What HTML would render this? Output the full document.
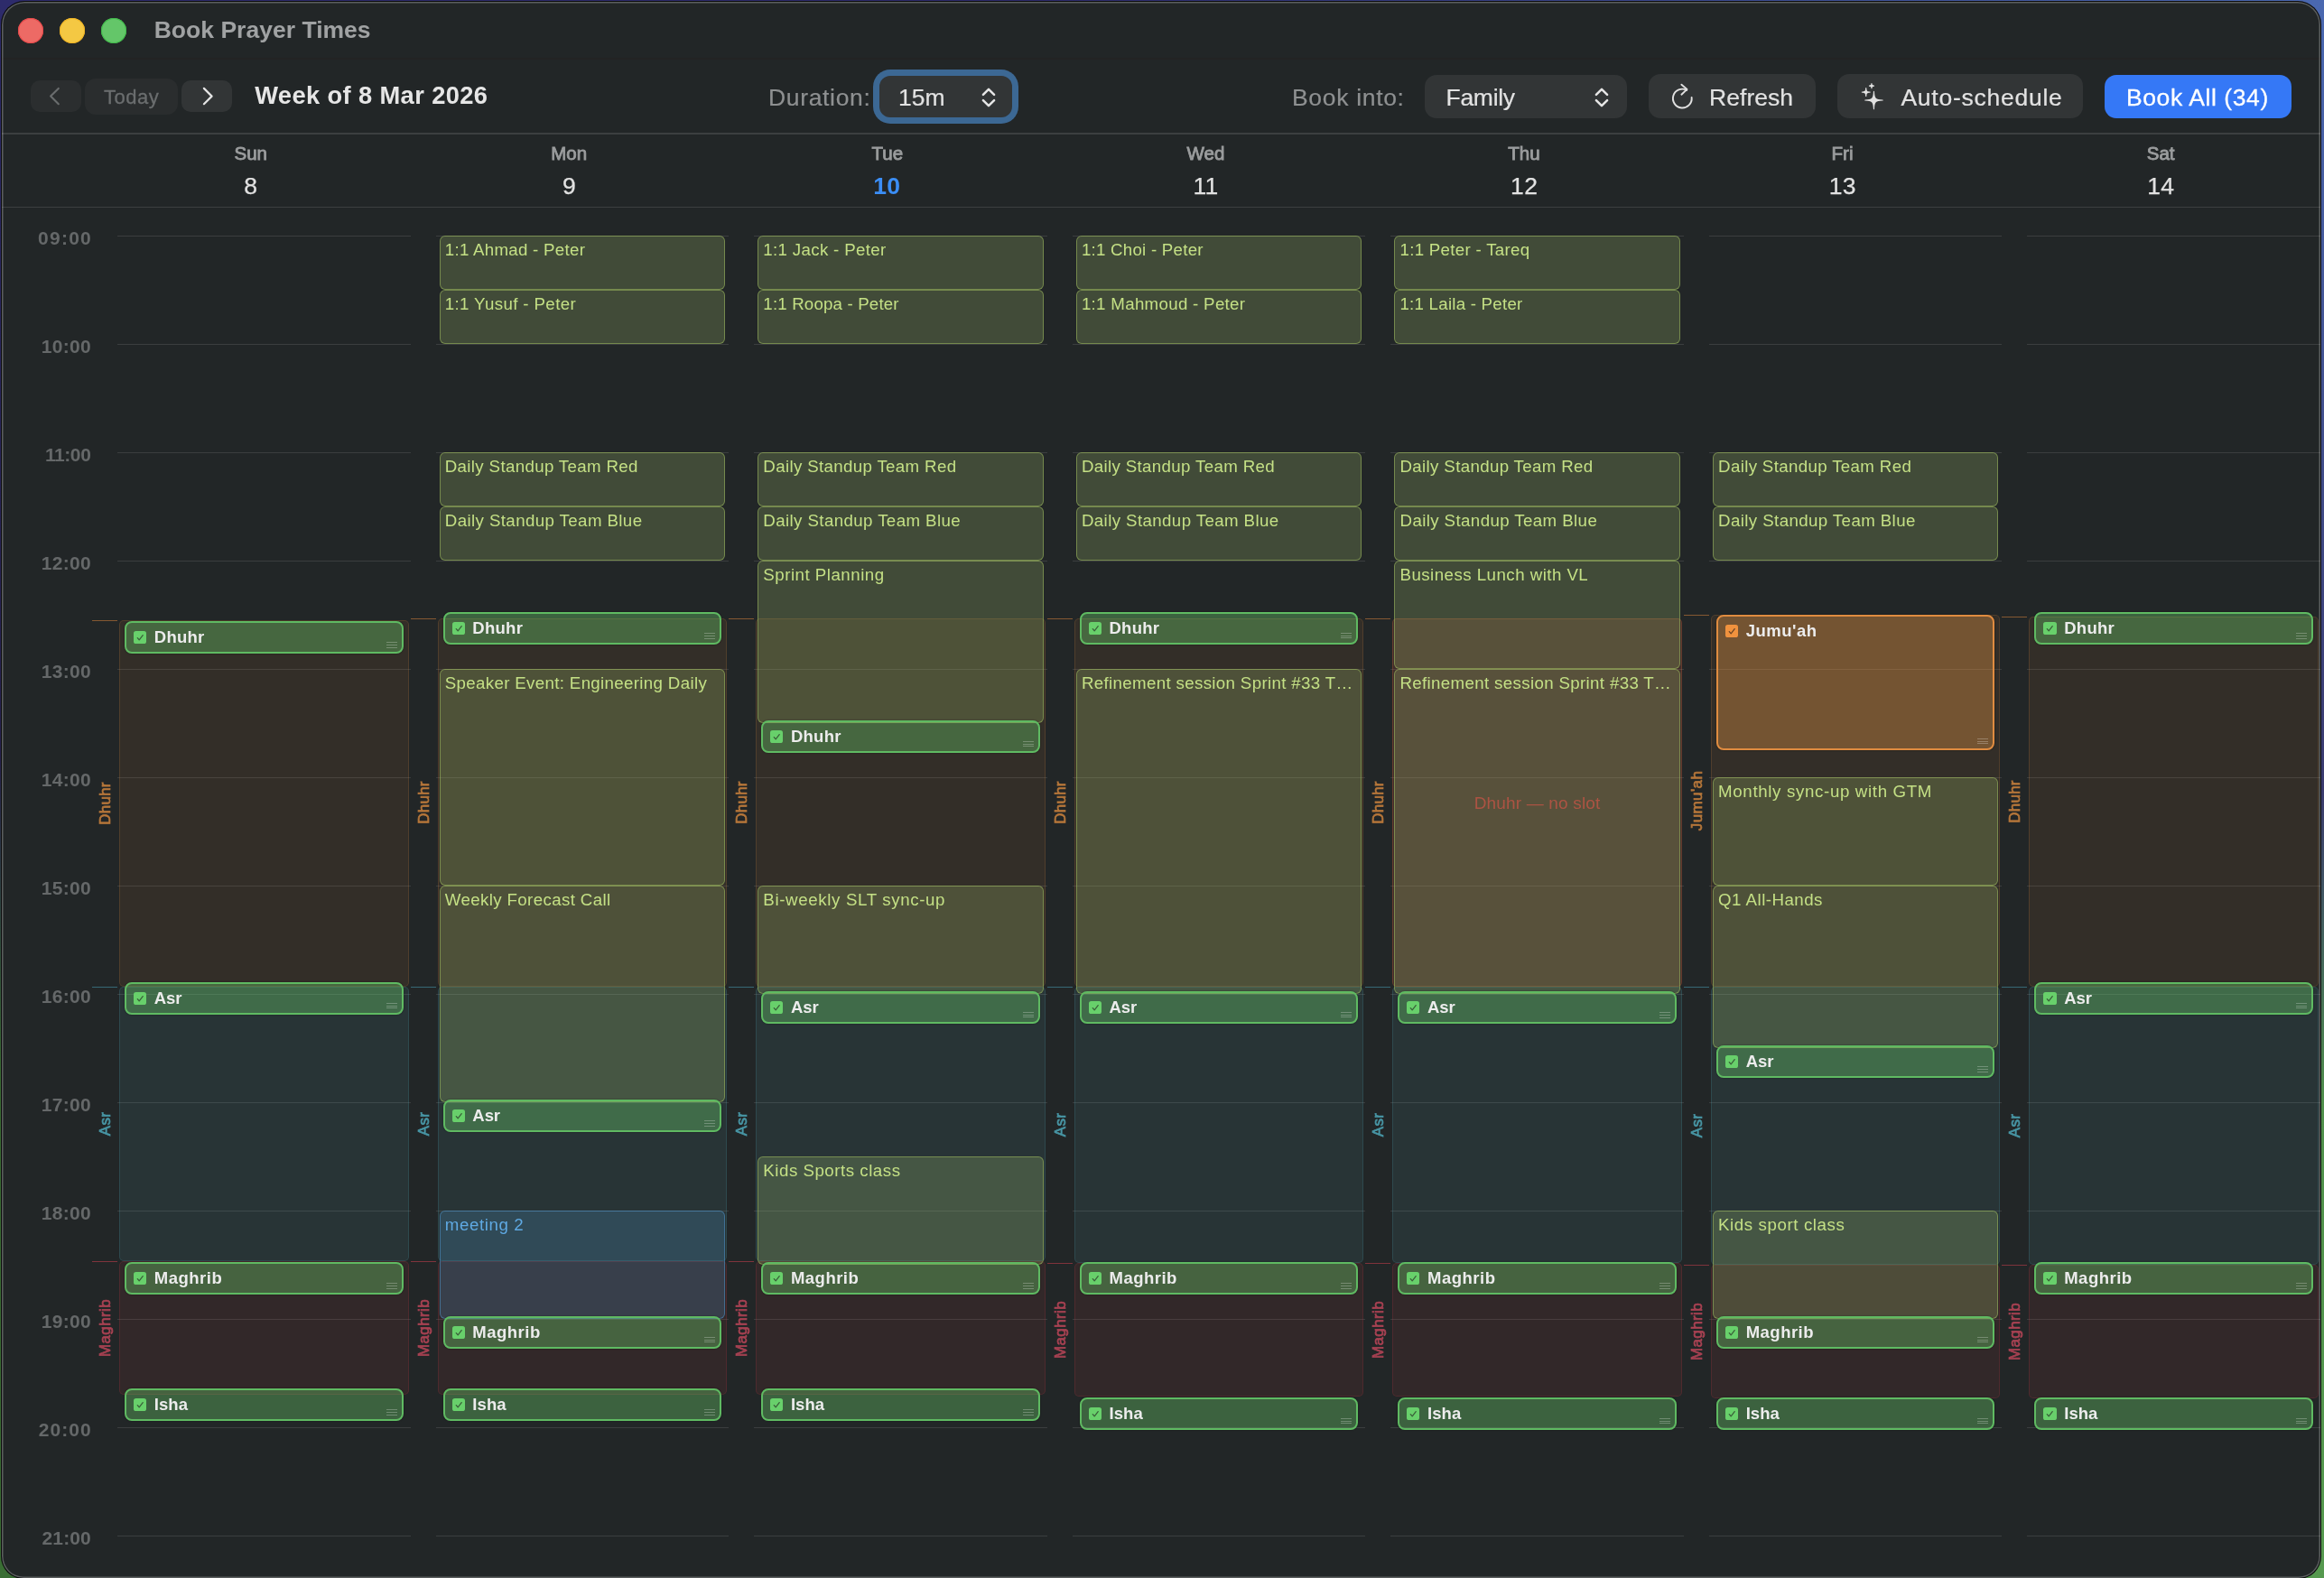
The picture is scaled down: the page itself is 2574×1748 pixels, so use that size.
<!DOCTYPE html>
<html lang="en"><head><meta charset="utf-8"><title>Book Prayer Times</title>
<style>
html,body{margin:0;padding:0;font-family:"Liberation Sans", sans-serif;}
body{width:2574px;height:1748px;overflow:hidden;position:relative;font-family:"Liberation Sans", sans-serif;
background:#2d2b6b;}
#win{position:absolute;left:2px;top:2px;width:2568px;height:1746px;background:#222627;border-radius:25px 25px 24px 24px;
box-shadow:0 0 0 1px #0c0c0d;overflow:hidden;}
#win:after{content:"";position:absolute;left:0;top:0;right:0;bottom:0;border-radius:25px 25px 24px 24px;
box-shadow:inset 0 0 0 1.5px rgba(255,255,255,0.26);pointer-events:none;z-index:50;}
#c{position:absolute;left:-2px;top:-2px;width:2574px;height:1748px;will-change:transform;transform:translateZ(0);}
.ev{position:absolute;box-sizing:border-box;border-radius:6px;border:1px solid rgba(160,190,95,0.55);background:rgba(158,186,107,0.25);}
.ev.bl{border-color:rgba(80,145,200,0.55);background:rgba(87,181,248,0.17);}
.sl{position:absolute;box-sizing:border-box;border-radius:8px;border:2px solid #5fba62;background:rgba(107,204,109,0.36);box-shadow:0 0 2px rgba(0,0,0,0.45);}
.sl.j{border-color:#e08c40;background:rgba(235,152,69,0.36);}
.cb{position:absolute;left:8px;top:8.8px;width:14.2px;height:14.2px;border-radius:2.6px;background:#68d06b;}
.sl.j .cb{background:#f0923e;}
.cb svg{position:absolute;left:0;top:0;}
.hd{position:absolute;right:5px;bottom:4px;width:12px;height:7px;
background:linear-gradient(180deg,rgba(255,255,255,0.26) 0,rgba(255,255,255,0.26) 1px,transparent 1px,transparent 2.75px,rgba(255,255,255,0.26) 2.75px,rgba(255,255,255,0.26) 3.75px,transparent 3.75px,transparent 5.5px,rgba(255,255,255,0.26) 5.5px,rgba(255,255,255,0.26) 6.5px,transparent 6.5px);}
.sn{position:absolute;left:30.8px;top:0;font-weight:bold;font-size:18.5px;line-height:32px;color:#ececec;white-space:nowrap;}
.wn{position:absolute;box-sizing:border-box;border-radius:5px;border:1px solid;}
.vl{position:absolute;width:200px;height:28px;line-height:28px;text-align:center;font-size:17px;letter-spacing:0.4px;white-space:nowrap;transform:rotate(-90deg);transform-origin:center center;-webkit-text-stroke:0.7px currentColor;}
.btn{position:absolute;background:#323536;}
</style></head><body>
<div style="position:absolute;left:0;top:0;width:60px;height:1748px;background:linear-gradient(180deg,#2d2b6b 0%,#28234f 48%,#3a6e34 68%,#3a6e34 100%);"></div>
<div style="position:absolute;right:0;top:0;width:60px;height:1748px;background:linear-gradient(180deg,#4a68b0 0%,#3a3a6e 50%,#508f4b 70%,#56994f 100%);"></div>
<div style="position:absolute;left:0;top:0;width:2574px;height:6px;background:linear-gradient(90deg,#2d2b6b 0%,#2d2b6b 45%,#4a68b0 100%);"></div>
<div style="position:absolute;left:0;bottom:0;width:2574px;height:6px;background:linear-gradient(90deg,#3a6e34 0%,#56994f 100%);"></div>
<div id="win"><div id="c">

<div style="position:absolute;left:20px;top:20px;width:28px;height:28px;border-radius:50%;background:#ed6a65;box-shadow:inset 0 0 0 1px #e8484a;"></div>
<div style="position:absolute;left:66px;top:20px;width:28px;height:28px;border-radius:50%;background:#f4c843;box-shadow:inset 0 0 0 1px #f0b323;"></div>
<div style="position:absolute;left:112px;top:20px;width:28px;height:28px;border-radius:50%;background:#64c669;box-shadow:inset 0 0 0 1px #3fbb4a;"></div>
<div style="position:absolute;top:16.02px;line-height:34px;font-size:26.5px;color:#a0a2a3;white-space:nowrap;font-weight:bold;letter-spacing:0.02px;left:170.7px;">Book Prayer Times</div>
<div style="position:absolute;left:2px;top:64.3px;width:2568px;height:1.4px;background:#232323;"></div>
<div style="position:absolute;left:34px;top:89px;width:56px;height:35px;border-radius:10px;background:#2b2e2f;"></div>
<svg style="position:absolute;left:34px;top:89px" width="56" height="35" viewBox="0 0 56 35"><path d="M30.8 8.9 L22.1 17.6 L30.8 26.2" fill="none" stroke="#6a6d6e" stroke-width="2.1" stroke-linecap="round" stroke-linejoin="round"/></svg>
<div style="position:absolute;left:94px;top:87px;width:103px;height:40px;border-radius:12px;background:#2a2d2e;"></div>
<div style="position:absolute;top:92.88px;line-height:29px;font-size:22px;color:#6b6e6f;white-space:nowrap;letter-spacing:0.5px;left:-254.3px;width:800px;text-align:center;-webkit-text-stroke:0.3px #6b6e6f;">Today</div>
<div style="position:absolute;left:201px;top:89px;width:56px;height:35px;border-radius:10px;background:#323536;"></div>
<svg style="position:absolute;left:201px;top:89px" width="56" height="35" viewBox="0 0 56 35"><path d="M24.9 8.9 L33.6 17.6 L24.9 26.2" fill="none" stroke="#e4e4e4" stroke-width="2.2" stroke-linecap="round" stroke-linejoin="round"/></svg>
<div style="position:absolute;top:88.24px;line-height:35px;font-size:27.3px;color:#e6e6e6;white-space:nowrap;font-weight:bold;letter-spacing:0.38px;left:282.2px;">Week of 8 Mar 2026</div>
<div style="position:absolute;top:90.82px;line-height:34px;font-size:26.5px;color:#8e9091;white-space:nowrap;letter-spacing:0.66px;left:851px;-webkit-text-stroke:0.2px currentColor;">Duration:</div>
<div style="position:absolute;left:967px;top:77px;width:161px;height:60px;border-radius:19px;background:#3c6894;"></div>
<div style="position:absolute;left:974px;top:84px;width:147px;height:46px;border-radius:12px;background:#323536;"></div>
<div style="position:absolute;top:90.82px;line-height:34px;font-size:26.5px;color:#e2e2e2;white-space:nowrap;left:995px;-webkit-text-stroke:0.2px currentColor;">15m</div>
<svg style="position:absolute;left:1084.5px;top:94.5px" width="20" height="26" viewBox="-10 -13 20 26"><path d="M-6.1 -3.1 L0 -9.2 L6.1 -3.1 M-6.1 3.1 L0 9.2 L6.1 3.1" fill="none" stroke="#e6e6e6" stroke-width="2.5" stroke-linecap="round" stroke-linejoin="round"/></svg>
<div style="position:absolute;top:90.82px;line-height:34px;font-size:26.5px;color:#8e9091;white-space:nowrap;letter-spacing:0.68px;left:1431px;-webkit-text-stroke:0.2px currentColor;">Book into:</div>
<div style="position:absolute;left:1578px;top:83px;width:224px;height:48px;border-radius:13px;background:#323536;"></div>
<div style="position:absolute;top:90.82px;line-height:34px;font-size:26.5px;color:#e2e2e2;white-space:nowrap;letter-spacing:-0.28px;left:1601.5px;-webkit-text-stroke:0.2px currentColor;">Family</div>
<svg style="position:absolute;left:1764.1px;top:94.5px" width="20" height="26" viewBox="-10 -13 20 26"><path d="M-6.1 -3.1 L0 -9.2 L6.1 -3.1 M-6.1 3.1 L0 9.2 L6.1 3.1" fill="none" stroke="#e6e6e6" stroke-width="2.5" stroke-linecap="round" stroke-linejoin="round"/></svg>
<div style="position:absolute;left:1826px;top:82.3px;width:185px;height:48.6px;border-radius:13px;background:#323536;"></div>
<svg style="position:absolute;left:1843px;top:89px" width="40" height="40" viewBox="1843 89 40 40"><path d="M1873.65 108.0 A10.4 10.4 0 1 1 1868.2 99.9" fill="none" stroke="#e1e1e1" stroke-width="1.9" stroke-linecap="round"/><path d="M1862.4 93.7 L1868.5 98.9 L1862.4 104.7" fill="none" stroke="#e1e1e1" stroke-width="1.9" stroke-linecap="round" stroke-linejoin="round"/></svg>
<div style="position:absolute;top:90.82px;line-height:34px;font-size:26.5px;color:#e2e2e2;white-space:nowrap;letter-spacing:0.02px;left:1893.1px;-webkit-text-stroke:0.2px currentColor;">Refresh</div>
<div style="position:absolute;left:2035px;top:82.3px;width:272px;height:48.6px;border-radius:13px;background:#323536;"></div>
<svg style="position:absolute;left:2055px;top:86px" width="40" height="40" viewBox="2055 86 40 40"><path d="M2074.90 101.25 A0.55 0.55 0 0 1 2076.00 101.25 C2076.40 109.10 2077.35 110.05 2085.20 110.45 A0.55 0.55 0 0 1 2085.20 111.55 C2077.35 111.95 2076.40 112.90 2076.00 120.75 A0.55 0.55 0 0 1 2074.90 120.75 C2074.50 112.90 2073.55 111.95 2065.70 111.55 A0.55 0.55 0 0 1 2065.70 110.45 C2073.55 110.05 2074.50 109.10 2074.90 101.25 Z M2066.15 97.70 A0.6 0.6 0 0 1 2067.35 97.70 C2067.55 101.00 2067.85 101.30 2071.15 101.50 A0.6 0.6 0 0 1 2071.15 102.70 C2067.85 102.90 2067.55 103.20 2067.35 106.50 A0.6 0.6 0 0 1 2066.15 106.50 C2065.95 103.20 2065.65 102.90 2062.35 102.70 A0.6 0.6 0 0 1 2062.35 101.50 C2065.65 101.30 2065.95 101.00 2066.15 97.70 Z M2072.40 92.55 A0.55 0.55 0 0 1 2073.50 92.55 C2073.65 94.20 2073.85 94.40 2075.50 94.55 A0.55 0.55 0 0 1 2075.50 95.65 C2073.85 95.80 2073.65 96.00 2073.50 97.65 A0.55 0.55 0 0 1 2072.40 97.65 C2072.25 96.00 2072.05 95.80 2070.40 95.65 A0.55 0.55 0 0 1 2070.40 94.55 C2072.05 94.40 2072.25 94.20 2072.40 92.55 Z" fill="#e1e1e1"/></svg>
<div style="position:absolute;top:90.82px;line-height:34px;font-size:26.5px;color:#e2e2e2;white-space:nowrap;letter-spacing:0.75px;left:2105.4px;-webkit-text-stroke:0.2px currentColor;">Auto-schedule</div>
<div style="position:absolute;left:2331px;top:83px;width:207px;height:47.8px;border-radius:13px;background:#3578f6;"></div>
<div style="position:absolute;top:90.82px;line-height:34px;font-size:26.5px;color:#ffffff;white-space:nowrap;letter-spacing:0.58px;left:2355px;-webkit-text-stroke:0.3px #fff;">Book All (34)</div>
<div style="position:absolute;left:2px;top:147.1px;width:2568px;height:1.7px;background:#3c3f40;"></div>
<div style="position:absolute;left:2px;top:228.8px;width:2568px;height:1.7px;background:#3c3f40;"></div>
<div style="position:absolute;top:156.4px;line-height:27px;font-size:20.5px;color:#9b9d9e;white-space:nowrap;left:-122.31px;width:800px;text-align:center;-webkit-text-stroke:0.85px #9b9d9e;">Sun</div>
<div style="position:absolute;top:188.82px;line-height:34px;font-size:26.5px;color:#e2e2e2;white-space:nowrap;letter-spacing:0.3px;left:-122.11px;width:800px;text-align:center;-webkit-text-stroke:0.25px #e2e2e2;">8</div>
<div style="position:absolute;top:156.4px;line-height:27px;font-size:20.5px;color:#9b9d9e;white-space:nowrap;left:230.26px;width:800px;text-align:center;-webkit-text-stroke:0.85px #9b9d9e;">Mon</div>
<div style="position:absolute;top:188.82px;line-height:34px;font-size:26.5px;color:#e2e2e2;white-space:nowrap;letter-spacing:0.3px;left:230.46px;width:800px;text-align:center;-webkit-text-stroke:0.25px #e2e2e2;">9</div>
<div style="position:absolute;top:156.4px;line-height:27px;font-size:20.5px;color:#9b9d9e;white-space:nowrap;left:582.83px;width:800px;text-align:center;-webkit-text-stroke:0.85px #9b9d9e;">Tue</div>
<div style="position:absolute;top:188.82px;line-height:34px;font-size:26.5px;color:#3b8ef6;white-space:nowrap;font-weight:bold;letter-spacing:0.3px;left:582.23px;width:800px;text-align:center;">10</div>
<div style="position:absolute;top:156.4px;line-height:27px;font-size:20.5px;color:#9b9d9e;white-space:nowrap;left:935.4px;width:800px;text-align:center;-webkit-text-stroke:0.85px #9b9d9e;">Wed</div>
<div style="position:absolute;top:188.82px;line-height:34px;font-size:26.5px;color:#e2e2e2;white-space:nowrap;letter-spacing:0.3px;left:935.6px;width:800px;text-align:center;-webkit-text-stroke:0.25px #e2e2e2;">11</div>
<div style="position:absolute;top:156.4px;line-height:27px;font-size:20.5px;color:#9b9d9e;white-space:nowrap;left:1287.97px;width:800px;text-align:center;-webkit-text-stroke:0.85px #9b9d9e;">Thu</div>
<div style="position:absolute;top:188.82px;line-height:34px;font-size:26.5px;color:#e2e2e2;white-space:nowrap;letter-spacing:0.3px;left:1288.17px;width:800px;text-align:center;-webkit-text-stroke:0.25px #e2e2e2;">12</div>
<div style="position:absolute;top:156.4px;line-height:27px;font-size:20.5px;color:#9b9d9e;white-space:nowrap;left:1640.54px;width:800px;text-align:center;-webkit-text-stroke:0.85px #9b9d9e;">Fri</div>
<div style="position:absolute;top:188.82px;line-height:34px;font-size:26.5px;color:#e2e2e2;white-space:nowrap;letter-spacing:0.3px;left:1640.74px;width:800px;text-align:center;-webkit-text-stroke:0.25px #e2e2e2;">13</div>
<div style="position:absolute;top:156.4px;line-height:27px;font-size:20.5px;color:#9b9d9e;white-space:nowrap;left:1993.11px;width:800px;text-align:center;-webkit-text-stroke:0.85px #9b9d9e;">Sat</div>
<div style="position:absolute;top:188.82px;line-height:34px;font-size:26.5px;color:#e2e2e2;white-space:nowrap;letter-spacing:0.3px;left:1993.31px;width:800px;text-align:center;-webkit-text-stroke:0.25px #e2e2e2;">14</div>
<div style="position:absolute;top:249.52px;line-height:27px;font-size:21px;color:#656869;white-space:nowrap;font-weight:bold;letter-spacing:1.25px;left:-697.95px;width:800px;text-align:right;">09:00</div>
<div style="position:absolute;left:130px;top:261px;width:324.57px;height:1px;background:rgba(255,255,255,0.115);"></div>
<div style="position:absolute;left:482.57px;top:261px;width:324.57px;height:1px;background:rgba(255,255,255,0.115);"></div>
<div style="position:absolute;left:835.14px;top:261px;width:324.57px;height:1px;background:rgba(255,255,255,0.115);"></div>
<div style="position:absolute;left:1187.71px;top:261px;width:324.57px;height:1px;background:rgba(255,255,255,0.115);"></div>
<div style="position:absolute;left:1540.29px;top:261px;width:324.57px;height:1px;background:rgba(255,255,255,0.115);"></div>
<div style="position:absolute;left:1892.86px;top:261px;width:324.57px;height:1px;background:rgba(255,255,255,0.115);"></div>
<div style="position:absolute;left:2245.43px;top:261px;width:324.57px;height:1px;background:rgba(255,255,255,0.115);"></div>
<div style="position:absolute;top:369.52px;line-height:27px;font-size:21px;color:#656869;white-space:nowrap;font-weight:bold;letter-spacing:0.33px;left:-698.87px;width:800px;text-align:right;">10:00</div>
<div style="position:absolute;left:130px;top:381px;width:324.57px;height:1px;background:rgba(255,255,255,0.115);"></div>
<div style="position:absolute;left:482.57px;top:381px;width:324.57px;height:1px;background:rgba(255,255,255,0.115);"></div>
<div style="position:absolute;left:835.14px;top:381px;width:324.57px;height:1px;background:rgba(255,255,255,0.115);"></div>
<div style="position:absolute;left:1187.71px;top:381px;width:324.57px;height:1px;background:rgba(255,255,255,0.115);"></div>
<div style="position:absolute;left:1540.29px;top:381px;width:324.57px;height:1px;background:rgba(255,255,255,0.115);"></div>
<div style="position:absolute;left:1892.86px;top:381px;width:324.57px;height:1px;background:rgba(255,255,255,0.115);"></div>
<div style="position:absolute;left:2245.43px;top:381px;width:324.57px;height:1px;background:rgba(255,255,255,0.115);"></div>
<div style="position:absolute;top:489.52px;line-height:27px;font-size:21px;color:#656869;white-space:nowrap;font-weight:bold;letter-spacing:-0.42px;left:-699.62px;width:800px;text-align:right;">11:00</div>
<div style="position:absolute;left:130px;top:501px;width:324.57px;height:1px;background:rgba(255,255,255,0.115);"></div>
<div style="position:absolute;left:482.57px;top:501px;width:324.57px;height:1px;background:rgba(255,255,255,0.115);"></div>
<div style="position:absolute;left:835.14px;top:501px;width:324.57px;height:1px;background:rgba(255,255,255,0.115);"></div>
<div style="position:absolute;left:1187.71px;top:501px;width:324.57px;height:1px;background:rgba(255,255,255,0.115);"></div>
<div style="position:absolute;left:1540.29px;top:501px;width:324.57px;height:1px;background:rgba(255,255,255,0.115);"></div>
<div style="position:absolute;left:1892.86px;top:501px;width:324.57px;height:1px;background:rgba(255,255,255,0.115);"></div>
<div style="position:absolute;left:2245.43px;top:501px;width:324.57px;height:1px;background:rgba(255,255,255,0.115);"></div>
<div style="position:absolute;top:609.52px;line-height:27px;font-size:21px;color:#656869;white-space:nowrap;font-weight:bold;letter-spacing:0.33px;left:-698.87px;width:800px;text-align:right;">12:00</div>
<div style="position:absolute;left:130px;top:621px;width:324.57px;height:1px;background:rgba(255,255,255,0.115);"></div>
<div style="position:absolute;left:482.57px;top:621px;width:324.57px;height:1px;background:rgba(255,255,255,0.115);"></div>
<div style="position:absolute;left:835.14px;top:621px;width:324.57px;height:1px;background:rgba(255,255,255,0.115);"></div>
<div style="position:absolute;left:1187.71px;top:621px;width:324.57px;height:1px;background:rgba(255,255,255,0.115);"></div>
<div style="position:absolute;left:1540.29px;top:621px;width:324.57px;height:1px;background:rgba(255,255,255,0.115);"></div>
<div style="position:absolute;left:1892.86px;top:621px;width:324.57px;height:1px;background:rgba(255,255,255,0.115);"></div>
<div style="position:absolute;left:2245.43px;top:621px;width:324.57px;height:1px;background:rgba(255,255,255,0.115);"></div>
<div style="position:absolute;top:729.52px;line-height:27px;font-size:21px;color:#656869;white-space:nowrap;font-weight:bold;letter-spacing:0.33px;left:-698.87px;width:800px;text-align:right;">13:00</div>
<div style="position:absolute;left:130px;top:741px;width:324.57px;height:1px;background:rgba(255,255,255,0.115);"></div>
<div style="position:absolute;left:482.57px;top:741px;width:324.57px;height:1px;background:rgba(255,255,255,0.115);"></div>
<div style="position:absolute;left:835.14px;top:741px;width:324.57px;height:1px;background:rgba(255,255,255,0.115);"></div>
<div style="position:absolute;left:1187.71px;top:741px;width:324.57px;height:1px;background:rgba(255,255,255,0.115);"></div>
<div style="position:absolute;left:1540.29px;top:741px;width:324.57px;height:1px;background:rgba(255,255,255,0.115);"></div>
<div style="position:absolute;left:1892.86px;top:741px;width:324.57px;height:1px;background:rgba(255,255,255,0.115);"></div>
<div style="position:absolute;left:2245.43px;top:741px;width:324.57px;height:1px;background:rgba(255,255,255,0.115);"></div>
<div style="position:absolute;top:849.52px;line-height:27px;font-size:21px;color:#656869;white-space:nowrap;font-weight:bold;letter-spacing:0.33px;left:-698.87px;width:800px;text-align:right;">14:00</div>
<div style="position:absolute;left:130px;top:861px;width:324.57px;height:1px;background:rgba(255,255,255,0.115);"></div>
<div style="position:absolute;left:482.57px;top:861px;width:324.57px;height:1px;background:rgba(255,255,255,0.115);"></div>
<div style="position:absolute;left:835.14px;top:861px;width:324.57px;height:1px;background:rgba(255,255,255,0.115);"></div>
<div style="position:absolute;left:1187.71px;top:861px;width:324.57px;height:1px;background:rgba(255,255,255,0.115);"></div>
<div style="position:absolute;left:1540.29px;top:861px;width:324.57px;height:1px;background:rgba(255,255,255,0.115);"></div>
<div style="position:absolute;left:1892.86px;top:861px;width:324.57px;height:1px;background:rgba(255,255,255,0.115);"></div>
<div style="position:absolute;left:2245.43px;top:861px;width:324.57px;height:1px;background:rgba(255,255,255,0.115);"></div>
<div style="position:absolute;top:969.52px;line-height:27px;font-size:21px;color:#656869;white-space:nowrap;font-weight:bold;letter-spacing:0.33px;left:-698.87px;width:800px;text-align:right;">15:00</div>
<div style="position:absolute;left:130px;top:981px;width:324.57px;height:1px;background:rgba(255,255,255,0.115);"></div>
<div style="position:absolute;left:482.57px;top:981px;width:324.57px;height:1px;background:rgba(255,255,255,0.115);"></div>
<div style="position:absolute;left:835.14px;top:981px;width:324.57px;height:1px;background:rgba(255,255,255,0.115);"></div>
<div style="position:absolute;left:1187.71px;top:981px;width:324.57px;height:1px;background:rgba(255,255,255,0.115);"></div>
<div style="position:absolute;left:1540.29px;top:981px;width:324.57px;height:1px;background:rgba(255,255,255,0.115);"></div>
<div style="position:absolute;left:1892.86px;top:981px;width:324.57px;height:1px;background:rgba(255,255,255,0.115);"></div>
<div style="position:absolute;left:2245.43px;top:981px;width:324.57px;height:1px;background:rgba(255,255,255,0.115);"></div>
<div style="position:absolute;top:1089.52px;line-height:27px;font-size:21px;color:#656869;white-space:nowrap;font-weight:bold;letter-spacing:0.33px;left:-698.87px;width:800px;text-align:right;">16:00</div>
<div style="position:absolute;left:130px;top:1101px;width:324.57px;height:1px;background:rgba(255,255,255,0.115);"></div>
<div style="position:absolute;left:482.57px;top:1101px;width:324.57px;height:1px;background:rgba(255,255,255,0.115);"></div>
<div style="position:absolute;left:835.14px;top:1101px;width:324.57px;height:1px;background:rgba(255,255,255,0.115);"></div>
<div style="position:absolute;left:1187.71px;top:1101px;width:324.57px;height:1px;background:rgba(255,255,255,0.115);"></div>
<div style="position:absolute;left:1540.29px;top:1101px;width:324.57px;height:1px;background:rgba(255,255,255,0.115);"></div>
<div style="position:absolute;left:1892.86px;top:1101px;width:324.57px;height:1px;background:rgba(255,255,255,0.115);"></div>
<div style="position:absolute;left:2245.43px;top:1101px;width:324.57px;height:1px;background:rgba(255,255,255,0.115);"></div>
<div style="position:absolute;top:1209.52px;line-height:27px;font-size:21px;color:#656869;white-space:nowrap;font-weight:bold;letter-spacing:0.33px;left:-698.87px;width:800px;text-align:right;">17:00</div>
<div style="position:absolute;left:130px;top:1221px;width:324.57px;height:1px;background:rgba(255,255,255,0.115);"></div>
<div style="position:absolute;left:482.57px;top:1221px;width:324.57px;height:1px;background:rgba(255,255,255,0.115);"></div>
<div style="position:absolute;left:835.14px;top:1221px;width:324.57px;height:1px;background:rgba(255,255,255,0.115);"></div>
<div style="position:absolute;left:1187.71px;top:1221px;width:324.57px;height:1px;background:rgba(255,255,255,0.115);"></div>
<div style="position:absolute;left:1540.29px;top:1221px;width:324.57px;height:1px;background:rgba(255,255,255,0.115);"></div>
<div style="position:absolute;left:1892.86px;top:1221px;width:324.57px;height:1px;background:rgba(255,255,255,0.115);"></div>
<div style="position:absolute;left:2245.43px;top:1221px;width:324.57px;height:1px;background:rgba(255,255,255,0.115);"></div>
<div style="position:absolute;top:1329.52px;line-height:27px;font-size:21px;color:#656869;white-space:nowrap;font-weight:bold;letter-spacing:0.33px;left:-698.87px;width:800px;text-align:right;">18:00</div>
<div style="position:absolute;left:130px;top:1341px;width:324.57px;height:1px;background:rgba(255,255,255,0.115);"></div>
<div style="position:absolute;left:482.57px;top:1341px;width:324.57px;height:1px;background:rgba(255,255,255,0.115);"></div>
<div style="position:absolute;left:835.14px;top:1341px;width:324.57px;height:1px;background:rgba(255,255,255,0.115);"></div>
<div style="position:absolute;left:1187.71px;top:1341px;width:324.57px;height:1px;background:rgba(255,255,255,0.115);"></div>
<div style="position:absolute;left:1540.29px;top:1341px;width:324.57px;height:1px;background:rgba(255,255,255,0.115);"></div>
<div style="position:absolute;left:1892.86px;top:1341px;width:324.57px;height:1px;background:rgba(255,255,255,0.115);"></div>
<div style="position:absolute;left:2245.43px;top:1341px;width:324.57px;height:1px;background:rgba(255,255,255,0.115);"></div>
<div style="position:absolute;top:1449.52px;line-height:27px;font-size:21px;color:#656869;white-space:nowrap;font-weight:bold;letter-spacing:0.33px;left:-698.87px;width:800px;text-align:right;">19:00</div>
<div style="position:absolute;left:130px;top:1461px;width:324.57px;height:1px;background:rgba(255,255,255,0.115);"></div>
<div style="position:absolute;left:482.57px;top:1461px;width:324.57px;height:1px;background:rgba(255,255,255,0.115);"></div>
<div style="position:absolute;left:835.14px;top:1461px;width:324.57px;height:1px;background:rgba(255,255,255,0.115);"></div>
<div style="position:absolute;left:1187.71px;top:1461px;width:324.57px;height:1px;background:rgba(255,255,255,0.115);"></div>
<div style="position:absolute;left:1540.29px;top:1461px;width:324.57px;height:1px;background:rgba(255,255,255,0.115);"></div>
<div style="position:absolute;left:1892.86px;top:1461px;width:324.57px;height:1px;background:rgba(255,255,255,0.115);"></div>
<div style="position:absolute;left:2245.43px;top:1461px;width:324.57px;height:1px;background:rgba(255,255,255,0.115);"></div>
<div style="position:absolute;top:1569.52px;line-height:27px;font-size:21px;color:#656869;white-space:nowrap;font-weight:bold;letter-spacing:1.1px;left:-698.1px;width:800px;text-align:right;">20:00</div>
<div style="position:absolute;left:130px;top:1581px;width:324.57px;height:1px;background:rgba(255,255,255,0.115);"></div>
<div style="position:absolute;left:482.57px;top:1581px;width:324.57px;height:1px;background:rgba(255,255,255,0.115);"></div>
<div style="position:absolute;left:835.14px;top:1581px;width:324.57px;height:1px;background:rgba(255,255,255,0.115);"></div>
<div style="position:absolute;left:1187.71px;top:1581px;width:324.57px;height:1px;background:rgba(255,255,255,0.115);"></div>
<div style="position:absolute;left:1540.29px;top:1581px;width:324.57px;height:1px;background:rgba(255,255,255,0.115);"></div>
<div style="position:absolute;left:1892.86px;top:1581px;width:324.57px;height:1px;background:rgba(255,255,255,0.115);"></div>
<div style="position:absolute;left:2245.43px;top:1581px;width:324.57px;height:1px;background:rgba(255,255,255,0.115);"></div>
<div style="position:absolute;top:1689.52px;line-height:27px;font-size:21px;color:#656869;white-space:nowrap;font-weight:bold;letter-spacing:0.15px;left:-699.05px;width:800px;text-align:right;">21:00</div>
<div style="position:absolute;left:130px;top:1701px;width:324.57px;height:1px;background:rgba(255,255,255,0.115);"></div>
<div style="position:absolute;left:482.57px;top:1701px;width:324.57px;height:1px;background:rgba(255,255,255,0.115);"></div>
<div style="position:absolute;left:835.14px;top:1701px;width:324.57px;height:1px;background:rgba(255,255,255,0.115);"></div>
<div style="position:absolute;left:1187.71px;top:1701px;width:324.57px;height:1px;background:rgba(255,255,255,0.115);"></div>
<div style="position:absolute;left:1540.29px;top:1701px;width:324.57px;height:1px;background:rgba(255,255,255,0.115);"></div>
<div style="position:absolute;left:1892.86px;top:1701px;width:324.57px;height:1px;background:rgba(255,255,255,0.115);"></div>
<div style="position:absolute;left:2245.43px;top:1701px;width:324.57px;height:1px;background:rgba(255,255,255,0.115);"></div>
<div style="position:absolute;left:102px;top:687px;width:28px;height:1px;background:rgba(215,130,60,0.55);"></div>
<div class="wn" style="left:132px;top:687px;width:320.57px;height:405.5px;background:rgba(234,144,63,0.085);border-color:rgba(235,140,60,0.16);"></div>
<div class="vl" style="left:17px;top:875.75px;color:#b5763a;letter-spacing:0.2px;">Dhuhr</div>
<div style="position:absolute;left:102px;top:1093px;width:28px;height:1px;background:rgba(70,150,170,0.6);"></div>
<div class="wn" style="left:132px;top:1093px;width:320.57px;height:303.5px;background:rgba(90,180,185,0.105);border-color:rgba(80,170,190,0.18);"></div>
<div class="vl" style="left:17px;top:1230.75px;color:#4896a5;">Asr</div>
<div style="position:absolute;left:102px;top:1397px;width:28px;height:1px;background:rgba(190,60,75,0.6);"></div>
<div class="wn" style="left:132px;top:1397px;width:320.57px;height:148px;background:rgba(223,71,72,0.09);border-color:rgba(220,60,80,0.17);"></div>
<div class="vl" style="left:17px;top:1457px;color:#a94253;">Maghrib</div>
<div style="position:absolute;left:454.57px;top:685px;width:28px;height:1px;background:rgba(215,130,60,0.55);"></div>
<div class="wn" style="left:484.57px;top:685px;width:320.57px;height:407.5px;background:rgba(234,144,63,0.085);border-color:rgba(235,140,60,0.16);"></div>
<div class="vl" style="left:369.57px;top:874.75px;color:#b5763a;letter-spacing:0.2px;">Dhuhr</div>
<div style="position:absolute;left:454.57px;top:1093px;width:28px;height:1px;background:rgba(70,150,170,0.6);"></div>
<div class="wn" style="left:484.57px;top:1093px;width:320.57px;height:303.5px;background:rgba(90,180,185,0.105);border-color:rgba(80,170,190,0.18);"></div>
<div class="vl" style="left:369.57px;top:1230.75px;color:#4896a5;">Asr</div>
<div style="position:absolute;left:454.57px;top:1397px;width:28px;height:1px;background:rgba(190,60,75,0.6);"></div>
<div class="wn" style="left:484.57px;top:1397px;width:320.57px;height:148px;background:rgba(223,71,72,0.09);border-color:rgba(220,60,80,0.17);"></div>
<div class="vl" style="left:369.57px;top:1457px;color:#a94253;">Maghrib</div>
<div style="position:absolute;left:807.14px;top:685px;width:28px;height:1px;background:rgba(215,130,60,0.55);"></div>
<div class="wn" style="left:837.14px;top:685px;width:320.57px;height:407.5px;background:rgba(234,144,63,0.085);border-color:rgba(235,140,60,0.16);"></div>
<div class="vl" style="left:722.14px;top:874.75px;color:#b5763a;letter-spacing:0.2px;">Dhuhr</div>
<div style="position:absolute;left:807.14px;top:1093px;width:28px;height:1px;background:rgba(70,150,170,0.6);"></div>
<div class="wn" style="left:837.14px;top:1093px;width:320.57px;height:303.5px;background:rgba(90,180,185,0.105);border-color:rgba(80,170,190,0.18);"></div>
<div class="vl" style="left:722.14px;top:1230.75px;color:#4896a5;">Asr</div>
<div style="position:absolute;left:807.14px;top:1397px;width:28px;height:1px;background:rgba(190,60,75,0.6);"></div>
<div class="wn" style="left:837.14px;top:1397px;width:320.57px;height:148px;background:rgba(223,71,72,0.09);border-color:rgba(220,60,80,0.17);"></div>
<div class="vl" style="left:722.14px;top:1457px;color:#a94253;">Maghrib</div>
<div style="position:absolute;left:1159.71px;top:685px;width:28px;height:1px;background:rgba(215,130,60,0.55);"></div>
<div class="wn" style="left:1189.71px;top:685px;width:320.57px;height:407.5px;background:rgba(234,144,63,0.085);border-color:rgba(235,140,60,0.16);"></div>
<div class="vl" style="left:1074.71px;top:874.75px;color:#b5763a;letter-spacing:0.2px;">Dhuhr</div>
<div style="position:absolute;left:1159.71px;top:1093px;width:28px;height:1px;background:rgba(70,150,170,0.6);"></div>
<div class="wn" style="left:1189.71px;top:1093px;width:320.57px;height:305.5px;background:rgba(90,180,185,0.105);border-color:rgba(80,170,190,0.18);"></div>
<div class="vl" style="left:1074.71px;top:1231.75px;color:#4896a5;">Asr</div>
<div style="position:absolute;left:1159.71px;top:1399px;width:28px;height:1px;background:rgba(190,60,75,0.6);"></div>
<div class="wn" style="left:1189.71px;top:1399px;width:320.57px;height:148px;background:rgba(223,71,72,0.09);border-color:rgba(220,60,80,0.17);"></div>
<div class="vl" style="left:1074.71px;top:1459px;color:#a94253;">Maghrib</div>
<div style="position:absolute;left:1512.29px;top:685px;width:28px;height:1px;background:rgba(215,130,60,0.55);"></div>
<div class="wn" style="left:1542.29px;top:685px;width:320.57px;height:407.5px;background:rgba(240,91,66,0.15);border-color:rgba(235,120,60,0.22);"></div>
<div class="vl" style="left:1427.29px;top:874.75px;color:#b5763a;letter-spacing:0.2px;">Dhuhr</div>
<div style="position:absolute;left:1512.29px;top:1093px;width:28px;height:1px;background:rgba(70,150,170,0.6);"></div>
<div class="wn" style="left:1542.29px;top:1093px;width:320.57px;height:305.5px;background:rgba(90,180,185,0.105);border-color:rgba(80,170,190,0.18);"></div>
<div class="vl" style="left:1427.29px;top:1231.75px;color:#4896a5;">Asr</div>
<div style="position:absolute;left:1512.29px;top:1399px;width:28px;height:1px;background:rgba(190,60,75,0.6);"></div>
<div class="wn" style="left:1542.29px;top:1399px;width:320.57px;height:148px;background:rgba(223,71,72,0.09);border-color:rgba(220,60,80,0.17);"></div>
<div class="vl" style="left:1427.29px;top:1459px;color:#a94253;">Maghrib</div>
<div style="position:absolute;left:1864.86px;top:681px;width:28px;height:1px;background:rgba(215,130,60,0.55);"></div>
<div class="wn" style="left:1894.86px;top:681px;width:320.57px;height:411.5px;background:rgba(234,144,63,0.085);border-color:rgba(235,140,60,0.16);"></div>
<div class="vl" style="left:1779.86px;top:872.75px;color:#b5763a;">Jumu&#x27;ah</div>
<div style="position:absolute;left:1864.86px;top:1093px;width:28px;height:1px;background:rgba(70,150,170,0.6);"></div>
<div class="wn" style="left:1894.86px;top:1093px;width:320.57px;height:307.5px;background:rgba(90,180,185,0.105);border-color:rgba(80,170,190,0.18);"></div>
<div class="vl" style="left:1779.86px;top:1232.75px;color:#4896a5;">Asr</div>
<div style="position:absolute;left:1864.86px;top:1401px;width:28px;height:1px;background:rgba(190,60,75,0.6);"></div>
<div class="wn" style="left:1894.86px;top:1401px;width:320.57px;height:148px;background:rgba(223,71,72,0.09);border-color:rgba(220,60,80,0.17);"></div>
<div class="vl" style="left:1779.86px;top:1461px;color:#a94253;">Maghrib</div>
<div style="position:absolute;left:2217.43px;top:683px;width:28px;height:1px;background:rgba(215,130,60,0.55);"></div>
<div class="wn" style="left:2247.43px;top:683px;width:320.57px;height:409.5px;background:rgba(234,144,63,0.085);border-color:rgba(235,140,60,0.16);"></div>
<div class="vl" style="left:2132.43px;top:873.75px;color:#b5763a;letter-spacing:0.2px;">Dhuhr</div>
<div style="position:absolute;left:2217.43px;top:1093px;width:28px;height:1px;background:rgba(70,150,170,0.6);"></div>
<div class="wn" style="left:2247.43px;top:1093px;width:320.57px;height:307.5px;background:rgba(90,180,185,0.105);border-color:rgba(80,170,190,0.18);"></div>
<div class="vl" style="left:2132.43px;top:1232.75px;color:#4896a5;">Asr</div>
<div style="position:absolute;left:2217.43px;top:1401px;width:28px;height:1px;background:rgba(190,60,75,0.6);"></div>
<div class="wn" style="left:2247.43px;top:1401px;width:320.57px;height:148px;background:rgba(223,71,72,0.09);border-color:rgba(220,60,80,0.17);"></div>
<div class="vl" style="left:2132.43px;top:1461px;color:#a94253;">Maghrib</div>
<div class="ev" style="left:486.57px;top:261px;width:316.57px;height:60px;"></div>
<div style="position:absolute;top:264.72px;line-height:24px;font-size:18.7px;color:#c4e085;white-space:nowrap;letter-spacing:0.28px;left:492.77px;">1:1 Ahmad - Peter</div>
<div class="ev" style="left:486.57px;top:321px;width:316.57px;height:60px;"></div>
<div style="position:absolute;top:324.72px;line-height:24px;font-size:18.7px;color:#c4e085;white-space:nowrap;letter-spacing:0.38px;left:492.77px;">1:1 Yusuf - Peter</div>
<div class="ev" style="left:486.57px;top:501px;width:316.57px;height:60px;"></div>
<div style="position:absolute;top:504.72px;line-height:24px;font-size:18.7px;color:#c4e085;white-space:nowrap;letter-spacing:0.35px;left:492.77px;">Daily Standup Team Red</div>
<div class="ev" style="left:486.57px;top:561px;width:316.57px;height:60px;"></div>
<div style="position:absolute;top:564.72px;line-height:24px;font-size:18.7px;color:#c4e085;white-space:nowrap;letter-spacing:0.4px;left:492.77px;">Daily Standup Team Blue</div>
<div class="ev" style="left:486.57px;top:741px;width:316.57px;height:240px;"></div>
<div style="position:absolute;top:744.72px;line-height:24px;font-size:18.7px;color:#c4e085;white-space:nowrap;letter-spacing:0.34px;left:492.77px;">Speaker Event: Engineering Daily</div>
<div class="ev" style="left:486.57px;top:981px;width:316.57px;height:240px;"></div>
<div style="position:absolute;top:984.72px;line-height:24px;font-size:18.7px;color:#c4e085;white-space:nowrap;letter-spacing:0.38px;left:492.77px;">Weekly Forecast Call</div>
<div class="ev bl" style="left:486.57px;top:1341px;width:316.57px;height:120px;"></div>
<div style="position:absolute;top:1344.72px;line-height:24px;font-size:18.7px;color:#5fa9e3;white-space:nowrap;letter-spacing:0.59px;left:492.77px;">meeting 2</div>
<div class="ev" style="left:839.14px;top:261px;width:316.57px;height:60px;"></div>
<div style="position:absolute;top:264.72px;line-height:24px;font-size:18.7px;color:#c4e085;white-space:nowrap;letter-spacing:0.33px;left:845.34px;">1:1 Jack - Peter</div>
<div class="ev" style="left:839.14px;top:321px;width:316.57px;height:60px;"></div>
<div style="position:absolute;top:324.72px;line-height:24px;font-size:18.7px;color:#c4e085;white-space:nowrap;letter-spacing:0.17px;left:845.34px;">1:1 Roopa - Peter</div>
<div class="ev" style="left:839.14px;top:501px;width:316.57px;height:60px;"></div>
<div style="position:absolute;top:504.72px;line-height:24px;font-size:18.7px;color:#c4e085;white-space:nowrap;letter-spacing:0.35px;left:845.34px;">Daily Standup Team Red</div>
<div class="ev" style="left:839.14px;top:561px;width:316.57px;height:60px;"></div>
<div style="position:absolute;top:564.72px;line-height:24px;font-size:18.7px;color:#c4e085;white-space:nowrap;letter-spacing:0.4px;left:845.34px;">Daily Standup Team Blue</div>
<div class="ev" style="left:839.14px;top:621px;width:316.57px;height:180px;"></div>
<div style="position:absolute;top:624.72px;line-height:24px;font-size:18.7px;color:#c4e085;white-space:nowrap;letter-spacing:0.5px;left:845.34px;">Sprint Planning</div>
<div class="ev" style="left:839.14px;top:981px;width:316.57px;height:120px;"></div>
<div style="position:absolute;top:984.72px;line-height:24px;font-size:18.7px;color:#c4e085;white-space:nowrap;letter-spacing:0.64px;left:845.34px;">Bi-weekly SLT sync-up</div>
<div class="ev" style="left:839.14px;top:1281px;width:316.57px;height:120px;"></div>
<div style="position:absolute;top:1284.72px;line-height:24px;font-size:18.7px;color:#c4e085;white-space:nowrap;letter-spacing:0.52px;left:845.34px;">Kids Sports class</div>
<div class="ev" style="left:1191.71px;top:261px;width:316.57px;height:60px;"></div>
<div style="position:absolute;top:264.72px;line-height:24px;font-size:18.7px;color:#c4e085;white-space:nowrap;letter-spacing:0.25px;left:1197.91px;">1:1 Choi - Peter</div>
<div class="ev" style="left:1191.71px;top:321px;width:316.57px;height:60px;"></div>
<div style="position:absolute;top:324.72px;line-height:24px;font-size:18.7px;color:#c4e085;white-space:nowrap;letter-spacing:0.31px;left:1197.91px;">1:1 Mahmoud - Peter</div>
<div class="ev" style="left:1191.71px;top:501px;width:316.57px;height:60px;"></div>
<div style="position:absolute;top:504.72px;line-height:24px;font-size:18.7px;color:#c4e085;white-space:nowrap;letter-spacing:0.35px;left:1197.91px;">Daily Standup Team Red</div>
<div class="ev" style="left:1191.71px;top:561px;width:316.57px;height:60px;"></div>
<div style="position:absolute;top:564.72px;line-height:24px;font-size:18.7px;color:#c4e085;white-space:nowrap;letter-spacing:0.4px;left:1197.91px;">Daily Standup Team Blue</div>
<div class="ev" style="left:1191.71px;top:741px;width:316.57px;height:360px;"></div>
<div style="position:absolute;top:744.72px;line-height:24px;font-size:18.7px;color:#c4e085;white-space:nowrap;letter-spacing:0.35px;left:1197.91px;">Refinement session Sprint #33 T…</div>
<div class="ev" style="left:1544.29px;top:261px;width:316.57px;height:60px;"></div>
<div style="position:absolute;top:264.72px;line-height:24px;font-size:18.7px;color:#c4e085;white-space:nowrap;letter-spacing:0.3px;left:1550.49px;">1:1 Peter - Tareq</div>
<div class="ev" style="left:1544.29px;top:321px;width:316.57px;height:60px;"></div>
<div style="position:absolute;top:324.72px;line-height:24px;font-size:18.7px;color:#c4e085;white-space:nowrap;letter-spacing:0.24px;left:1550.49px;">1:1 Laila - Peter</div>
<div class="ev" style="left:1544.29px;top:501px;width:316.57px;height:60px;"></div>
<div style="position:absolute;top:504.72px;line-height:24px;font-size:18.7px;color:#c4e085;white-space:nowrap;letter-spacing:0.35px;left:1550.49px;">Daily Standup Team Red</div>
<div class="ev" style="left:1544.29px;top:561px;width:316.57px;height:60px;"></div>
<div style="position:absolute;top:564.72px;line-height:24px;font-size:18.7px;color:#c4e085;white-space:nowrap;letter-spacing:0.4px;left:1550.49px;">Daily Standup Team Blue</div>
<div class="ev" style="left:1544.29px;top:621px;width:316.57px;height:120px;"></div>
<div style="position:absolute;top:624.72px;line-height:24px;font-size:18.7px;color:#c4e085;white-space:nowrap;letter-spacing:0.47px;left:1550.49px;">Business Lunch with VL</div>
<div class="ev" style="left:1544.29px;top:741px;width:316.57px;height:360px;"></div>
<div style="position:absolute;top:744.72px;line-height:24px;font-size:18.7px;color:#c4e085;white-space:nowrap;letter-spacing:0.35px;left:1550.49px;">Refinement session Sprint #33 T…</div>
<div class="ev" style="left:1896.86px;top:501px;width:316.57px;height:60px;"></div>
<div style="position:absolute;top:504.72px;line-height:24px;font-size:18.7px;color:#c4e085;white-space:nowrap;letter-spacing:0.35px;left:1903.06px;">Daily Standup Team Red</div>
<div class="ev" style="left:1896.86px;top:561px;width:316.57px;height:60px;"></div>
<div style="position:absolute;top:564.72px;line-height:24px;font-size:18.7px;color:#c4e085;white-space:nowrap;letter-spacing:0.4px;left:1903.06px;">Daily Standup Team Blue</div>
<div class="ev" style="left:1896.86px;top:861px;width:316.57px;height:120px;"></div>
<div style="position:absolute;top:864.72px;line-height:24px;font-size:18.7px;color:#c4e085;white-space:nowrap;letter-spacing:0.66px;left:1903.06px;">Monthly sync-up with GTM</div>
<div class="ev" style="left:1896.86px;top:981px;width:316.57px;height:180px;"></div>
<div style="position:absolute;top:984.72px;line-height:24px;font-size:18.7px;color:#c4e085;white-space:nowrap;letter-spacing:0.48px;left:1903.06px;">Q1 All-Hands</div>
<div class="ev" style="left:1896.86px;top:1341px;width:316.57px;height:120px;"></div>
<div style="position:absolute;top:1344.72px;line-height:24px;font-size:18.7px;color:#c4e085;white-space:nowrap;letter-spacing:0.6px;left:1903.06px;">Kids sport class</div>
<div style="position:absolute;top:877.42px;line-height:25px;font-size:19px;color:rgba(205,85,70,0.72);white-space:nowrap;letter-spacing:0.17px;left:1302.57px;width:800px;text-align:center;">Dhuhr — no slot</div>
<div class="sl" style="left:138px;top:688px;width:308.57px;height:36px;"><div class="cb"><svg width="14.2" height="14.2" viewBox="0 0 14.2 14.2"><path d="M4.3 7.6 L6.2 9.9 L10.2 4.6" fill="none" stroke="#3a603a" stroke-width="1.25" stroke-linecap="round" stroke-linejoin="round"/></svg></div><div class="sn" style="letter-spacing:0.26px">Dhuhr</div><div class="hd"></div></div>
<div class="sl" style="left:138px;top:1088px;width:308.57px;height:36px;"><div class="cb"><svg width="14.2" height="14.2" viewBox="0 0 14.2 14.2"><path d="M4.3 7.6 L6.2 9.9 L10.2 4.6" fill="none" stroke="#3a603a" stroke-width="1.25" stroke-linecap="round" stroke-linejoin="round"/></svg></div><div class="sn" style="letter-spacing:-0.08px">Asr</div><div class="hd"></div></div>
<div class="sl" style="left:138px;top:1398px;width:308.57px;height:36px;"><div class="cb"><svg width="14.2" height="14.2" viewBox="0 0 14.2 14.2"><path d="M4.3 7.6 L6.2 9.9 L10.2 4.6" fill="none" stroke="#3a603a" stroke-width="1.25" stroke-linecap="round" stroke-linejoin="round"/></svg></div><div class="sn" style="letter-spacing:0.49px">Maghrib</div><div class="hd"></div></div>
<div class="sl" style="left:138px;top:1538px;width:308.57px;height:36px;"><div class="cb"><svg width="14.2" height="14.2" viewBox="0 0 14.2 14.2"><path d="M4.3 7.6 L6.2 9.9 L10.2 4.6" fill="none" stroke="#3a603a" stroke-width="1.25" stroke-linecap="round" stroke-linejoin="round"/></svg></div><div class="sn" style="letter-spacing:0.05px">Isha</div><div class="hd"></div></div>
<div class="sl" style="left:490.57px;top:678px;width:308.57px;height:36px;"><div class="cb"><svg width="14.2" height="14.2" viewBox="0 0 14.2 14.2"><path d="M4.3 7.6 L6.2 9.9 L10.2 4.6" fill="none" stroke="#3a603a" stroke-width="1.25" stroke-linecap="round" stroke-linejoin="round"/></svg></div><div class="sn" style="letter-spacing:0.26px">Dhuhr</div><div class="hd"></div></div>
<div class="sl" style="left:490.57px;top:1218px;width:308.57px;height:36px;"><div class="cb"><svg width="14.2" height="14.2" viewBox="0 0 14.2 14.2"><path d="M4.3 7.6 L6.2 9.9 L10.2 4.6" fill="none" stroke="#3a603a" stroke-width="1.25" stroke-linecap="round" stroke-linejoin="round"/></svg></div><div class="sn" style="letter-spacing:-0.08px">Asr</div><div class="hd"></div></div>
<div class="sl" style="left:490.57px;top:1458px;width:308.57px;height:36px;"><div class="cb"><svg width="14.2" height="14.2" viewBox="0 0 14.2 14.2"><path d="M4.3 7.6 L6.2 9.9 L10.2 4.6" fill="none" stroke="#3a603a" stroke-width="1.25" stroke-linecap="round" stroke-linejoin="round"/></svg></div><div class="sn" style="letter-spacing:0.49px">Maghrib</div><div class="hd"></div></div>
<div class="sl" style="left:490.57px;top:1538px;width:308.57px;height:36px;"><div class="cb"><svg width="14.2" height="14.2" viewBox="0 0 14.2 14.2"><path d="M4.3 7.6 L6.2 9.9 L10.2 4.6" fill="none" stroke="#3a603a" stroke-width="1.25" stroke-linecap="round" stroke-linejoin="round"/></svg></div><div class="sn" style="letter-spacing:0.05px">Isha</div><div class="hd"></div></div>
<div class="sl" style="left:843.14px;top:798px;width:308.57px;height:36px;"><div class="cb"><svg width="14.2" height="14.2" viewBox="0 0 14.2 14.2"><path d="M4.3 7.6 L6.2 9.9 L10.2 4.6" fill="none" stroke="#3a603a" stroke-width="1.25" stroke-linecap="round" stroke-linejoin="round"/></svg></div><div class="sn" style="letter-spacing:0.26px">Dhuhr</div><div class="hd"></div></div>
<div class="sl" style="left:843.14px;top:1098px;width:308.57px;height:36px;"><div class="cb"><svg width="14.2" height="14.2" viewBox="0 0 14.2 14.2"><path d="M4.3 7.6 L6.2 9.9 L10.2 4.6" fill="none" stroke="#3a603a" stroke-width="1.25" stroke-linecap="round" stroke-linejoin="round"/></svg></div><div class="sn" style="letter-spacing:-0.08px">Asr</div><div class="hd"></div></div>
<div class="sl" style="left:843.14px;top:1398px;width:308.57px;height:36px;"><div class="cb"><svg width="14.2" height="14.2" viewBox="0 0 14.2 14.2"><path d="M4.3 7.6 L6.2 9.9 L10.2 4.6" fill="none" stroke="#3a603a" stroke-width="1.25" stroke-linecap="round" stroke-linejoin="round"/></svg></div><div class="sn" style="letter-spacing:0.49px">Maghrib</div><div class="hd"></div></div>
<div class="sl" style="left:843.14px;top:1538px;width:308.57px;height:36px;"><div class="cb"><svg width="14.2" height="14.2" viewBox="0 0 14.2 14.2"><path d="M4.3 7.6 L6.2 9.9 L10.2 4.6" fill="none" stroke="#3a603a" stroke-width="1.25" stroke-linecap="round" stroke-linejoin="round"/></svg></div><div class="sn" style="letter-spacing:0.05px">Isha</div><div class="hd"></div></div>
<div class="sl" style="left:1195.71px;top:678px;width:308.57px;height:36px;"><div class="cb"><svg width="14.2" height="14.2" viewBox="0 0 14.2 14.2"><path d="M4.3 7.6 L6.2 9.9 L10.2 4.6" fill="none" stroke="#3a603a" stroke-width="1.25" stroke-linecap="round" stroke-linejoin="round"/></svg></div><div class="sn" style="letter-spacing:0.26px">Dhuhr</div><div class="hd"></div></div>
<div class="sl" style="left:1195.71px;top:1098px;width:308.57px;height:36px;"><div class="cb"><svg width="14.2" height="14.2" viewBox="0 0 14.2 14.2"><path d="M4.3 7.6 L6.2 9.9 L10.2 4.6" fill="none" stroke="#3a603a" stroke-width="1.25" stroke-linecap="round" stroke-linejoin="round"/></svg></div><div class="sn" style="letter-spacing:-0.08px">Asr</div><div class="hd"></div></div>
<div class="sl" style="left:1195.71px;top:1398px;width:308.57px;height:36px;"><div class="cb"><svg width="14.2" height="14.2" viewBox="0 0 14.2 14.2"><path d="M4.3 7.6 L6.2 9.9 L10.2 4.6" fill="none" stroke="#3a603a" stroke-width="1.25" stroke-linecap="round" stroke-linejoin="round"/></svg></div><div class="sn" style="letter-spacing:0.49px">Maghrib</div><div class="hd"></div></div>
<div class="sl" style="left:1195.71px;top:1548px;width:308.57px;height:36px;"><div class="cb"><svg width="14.2" height="14.2" viewBox="0 0 14.2 14.2"><path d="M4.3 7.6 L6.2 9.9 L10.2 4.6" fill="none" stroke="#3a603a" stroke-width="1.25" stroke-linecap="round" stroke-linejoin="round"/></svg></div><div class="sn" style="letter-spacing:0.05px">Isha</div><div class="hd"></div></div>
<div class="sl" style="left:1548.29px;top:1098px;width:308.57px;height:36px;"><div class="cb"><svg width="14.2" height="14.2" viewBox="0 0 14.2 14.2"><path d="M4.3 7.6 L6.2 9.9 L10.2 4.6" fill="none" stroke="#3a603a" stroke-width="1.25" stroke-linecap="round" stroke-linejoin="round"/></svg></div><div class="sn" style="letter-spacing:-0.08px">Asr</div><div class="hd"></div></div>
<div class="sl" style="left:1548.29px;top:1398px;width:308.57px;height:36px;"><div class="cb"><svg width="14.2" height="14.2" viewBox="0 0 14.2 14.2"><path d="M4.3 7.6 L6.2 9.9 L10.2 4.6" fill="none" stroke="#3a603a" stroke-width="1.25" stroke-linecap="round" stroke-linejoin="round"/></svg></div><div class="sn" style="letter-spacing:0.49px">Maghrib</div><div class="hd"></div></div>
<div class="sl" style="left:1548.29px;top:1548px;width:308.57px;height:36px;"><div class="cb"><svg width="14.2" height="14.2" viewBox="0 0 14.2 14.2"><path d="M4.3 7.6 L6.2 9.9 L10.2 4.6" fill="none" stroke="#3a603a" stroke-width="1.25" stroke-linecap="round" stroke-linejoin="round"/></svg></div><div class="sn" style="letter-spacing:0.05px">Isha</div><div class="hd"></div></div>
<div class="sl" style="left:1900.86px;top:1158px;width:308.57px;height:36px;"><div class="cb"><svg width="14.2" height="14.2" viewBox="0 0 14.2 14.2"><path d="M4.3 7.6 L6.2 9.9 L10.2 4.6" fill="none" stroke="#3a603a" stroke-width="1.25" stroke-linecap="round" stroke-linejoin="round"/></svg></div><div class="sn" style="letter-spacing:-0.08px">Asr</div><div class="hd"></div></div>
<div class="sl" style="left:1900.86px;top:1458px;width:308.57px;height:36px;"><div class="cb"><svg width="14.2" height="14.2" viewBox="0 0 14.2 14.2"><path d="M4.3 7.6 L6.2 9.9 L10.2 4.6" fill="none" stroke="#3a603a" stroke-width="1.25" stroke-linecap="round" stroke-linejoin="round"/></svg></div><div class="sn" style="letter-spacing:0.49px">Maghrib</div><div class="hd"></div></div>
<div class="sl" style="left:1900.86px;top:1548px;width:308.57px;height:36px;"><div class="cb"><svg width="14.2" height="14.2" viewBox="0 0 14.2 14.2"><path d="M4.3 7.6 L6.2 9.9 L10.2 4.6" fill="none" stroke="#3a603a" stroke-width="1.25" stroke-linecap="round" stroke-linejoin="round"/></svg></div><div class="sn" style="letter-spacing:0.05px">Isha</div><div class="hd"></div></div>
<div class="sl" style="left:2253.43px;top:678px;width:308.57px;height:36px;"><div class="cb"><svg width="14.2" height="14.2" viewBox="0 0 14.2 14.2"><path d="M4.3 7.6 L6.2 9.9 L10.2 4.6" fill="none" stroke="#3a603a" stroke-width="1.25" stroke-linecap="round" stroke-linejoin="round"/></svg></div><div class="sn" style="letter-spacing:0.26px">Dhuhr</div><div class="hd"></div></div>
<div class="sl" style="left:2253.43px;top:1088px;width:308.57px;height:36px;"><div class="cb"><svg width="14.2" height="14.2" viewBox="0 0 14.2 14.2"><path d="M4.3 7.6 L6.2 9.9 L10.2 4.6" fill="none" stroke="#3a603a" stroke-width="1.25" stroke-linecap="round" stroke-linejoin="round"/></svg></div><div class="sn" style="letter-spacing:-0.08px">Asr</div><div class="hd"></div></div>
<div class="sl" style="left:2253.43px;top:1398px;width:308.57px;height:36px;"><div class="cb"><svg width="14.2" height="14.2" viewBox="0 0 14.2 14.2"><path d="M4.3 7.6 L6.2 9.9 L10.2 4.6" fill="none" stroke="#3a603a" stroke-width="1.25" stroke-linecap="round" stroke-linejoin="round"/></svg></div><div class="sn" style="letter-spacing:0.49px">Maghrib</div><div class="hd"></div></div>
<div class="sl" style="left:2253.43px;top:1548px;width:308.57px;height:36px;"><div class="cb"><svg width="14.2" height="14.2" viewBox="0 0 14.2 14.2"><path d="M4.3 7.6 L6.2 9.9 L10.2 4.6" fill="none" stroke="#3a603a" stroke-width="1.25" stroke-linecap="round" stroke-linejoin="round"/></svg></div><div class="sn" style="letter-spacing:0.05px">Isha</div><div class="hd"></div></div>
<div class="sl j" style="left:1900.86px;top:681px;width:308.57px;height:150px;"><div class="cb"><svg width="14.2" height="14.2" viewBox="0 0 14.2 14.2"><path d="M4.3 7.6 L6.2 9.9 L10.2 4.6" fill="none" stroke="#6a4324" stroke-width="1.25" stroke-linecap="round" stroke-linejoin="round"/></svg></div><div class="sn" style="letter-spacing:0.53px">Jumu&#x27;ah</div><div class="hd"></div></div>
</div></div>
</body></html>
